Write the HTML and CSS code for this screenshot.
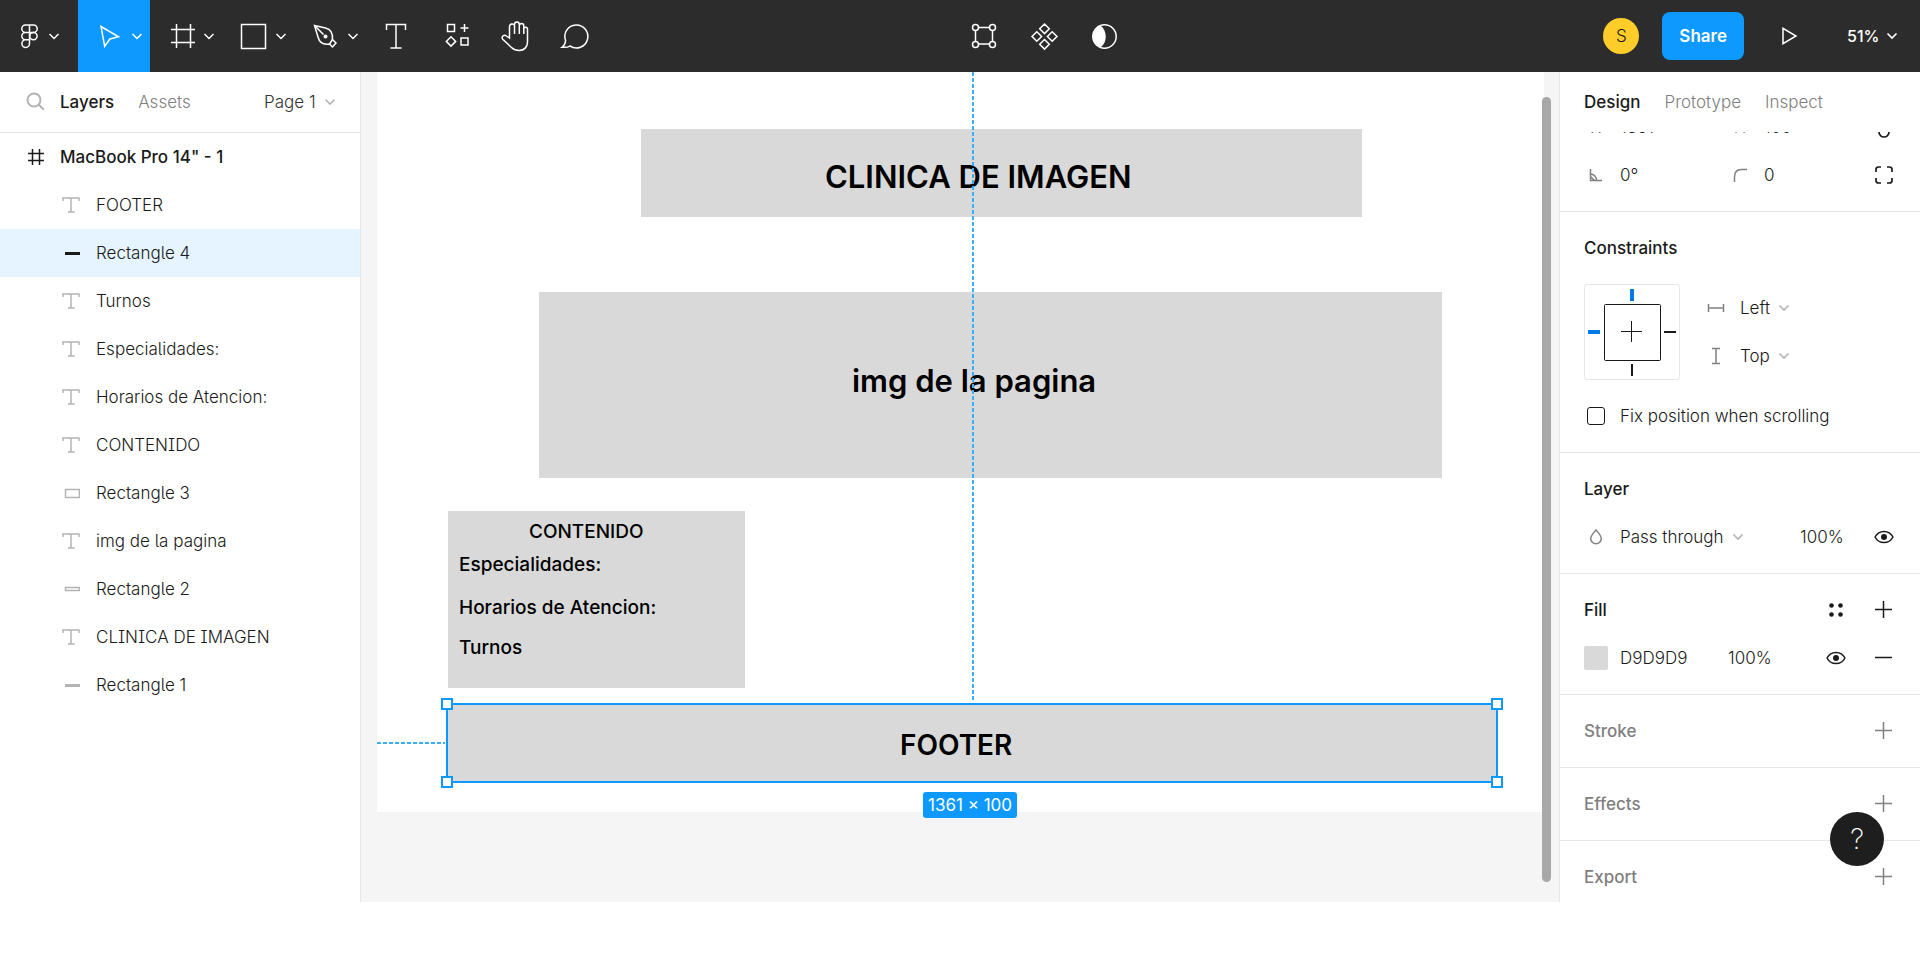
FILE: index.html
```html
<!DOCTYPE html>
<html lang="en">
<head>
<meta charset="utf-8">
<title>Design editor</title>
<link rel="stylesheet" href="styles.css">
</head>
<body>
<svg class="defs" aria-hidden="true">
  <symbol id="chev" viewBox="0 0 12 8"><path d="M1.500 1.500 6 6l4.500-4.500"/></symbol>
  <symbol id="text" viewBox="0 0 18 18"><path d="M1 5V2h16v3M9 2v14M6 16h6.500"/></symbol>
  <symbol id="plus" viewBox="0 0 18 18"><path d="M8.500 0v17M0 8.500h17"/></symbol>
  <symbol id="eye" viewBox="0 0 20 14"><path d="M1 7C3 3.200 6.200 1.400 10 1.400S17 3.200 19 7c-2 3.800-5.200 5.600-9 5.600S3 10.800 1 7z"/><circle cx="10" cy="7" r="3" class="solid"/></symbol>
</svg>
<div class="app">
  <header class="toolbar">
    <nav class="tools" aria-label="Tools">
      <button class="tool tool-menu" aria-label="Main menu"><svg width="78" height="72"><path d="M29.500 25h-4a3.700 3.700 0 0 0 0 7.400h4zM29.500 25h4a3.700 3.700 0 0 1 0 7.400h-4zM29.500 32.400h-4a3.700 3.700 0 0 0 0 7.400h4zM29.500 39.800h-4a3.800 3.800 0 1 0 4 3.700z"/><circle cx="33.400" cy="36.100" r="3.700"/><path d="m49.500 34 4.500 4.500 4.500-4.500"/></svg></button>
      <button class="tool tool-wide active" aria-label="Move"><svg width="72" height="72"><path d="m23 26.500 17.500 10.300-8.600 2.200-5.200 7.300z"/><path d="m54.500 34 4.500 4.500 4.500-4.500"/></svg></button>
      <button class="tool tool-wide" aria-label="Frame"><svg width="72" height="72"><path d="M26.500 24v24M40.500 24v24M21 29.500h24M21 42.500h24"/><path d="m54.500 34 4.500 4.500 4.500-4.500"/></svg></button>
      <button class="tool tool-wide" aria-label="Rectangle"><svg width="72" height="72"><path d="M19.500 24.500h24v24h-24z"/><path d="m54.500 34 4.500 4.500 4.500-4.500"/></svg></button>
      <button class="tool tool-wide" aria-label="Pen"><svg width="72" height="72"><path d="m20.500 25.500 11 2.500c6 1.500 7.500 6 7 11.500l3.500 3.500-3.500 4-3-3c-6 1-10-1-11.500-7zM20.500 25.500l9 9"/><path d="m38.500 39.500-3 4.500"/><circle cx="31.500" cy="36.500" r="2" class="solid"/><path d="m54.500 34 4.500 4.500 4.500-4.500"/></svg></button>
      <button class="tool" aria-label="Text"><svg width="60" height="72"><path d="M20.500 30v-5.500h19V30M30 24.500v23M24.500 48h11"/></svg></button>
      <button class="tool" aria-label="Resources"><svg width="60" height="72"><path d="M21.500 24.500h7v7h-7zM35 38h7v7h-7zM25 36.700l4.700 4.700-4.700 4.700-4.700-4.700zM38.500 24v8M34.500 28h8"/></svg></button>
      <button class="tool" aria-label="Hand"><svg width="60" height="72"><path d="M23.500 38V27c0-4 5-4 5-.5V34v-9.500c0-3.500 4.800-3.500 4.800 0V34v-8c0-3.300 4.500-3.300 4.500 0v8-4.500c0-3 3.700-2.800 3.700 0V42c0 5-3.500 8.500-8 8.500-4 0-6-1-8-3l-8.500-8c-2.500-2.500 1-5.500 3.500-3.500z"/></svg></button>
      <button class="tool" aria-label="Comment"><svg width="60" height="72"><path d="M19.600 40.500A11.500 11.500 0 1 1 24 46c-2 1.500-5 1.500-8 1.300 2-1.300 3.300-3.300 3.600-6.800z"/></svg></button>
    </nav>
    <div class="tools tools-mid">
      <button class="tool" aria-label="Edit object"><svg width="60" height="72"><path d="M24.500 27.500h11M24.500 44h11M21.500 30.500v10.500M38.500 30.500v10.500"/><circle cx="21.500" cy="27.500" r="3"/><circle cx="38.500" cy="27.500" r="3"/><circle cx="21.500" cy="44.500" r="3"/><circle cx="38.500" cy="44.500" r="3"/></svg></button>
      <button class="tool" aria-label="Create component"><svg width="60" height="72"><path d="m30.500 24 4.800 4.800-4.800 4.800-4.800-4.800zM30.500 39.500l4.800 4.800-4.800 4.800-4.800-4.800zM22.800 31.700l4.800 4.800-4.800 4.800-4.800-4.800zM38.200 31.700l4.800 4.800-4.800 4.800-4.800-4.800z"/></svg></button>
      <button class="tool" aria-label="Use as mask"><svg width="60" height="72"><circle cx="30.500" cy="36.500" r="11.700"/><path class="solid" d="M26.500 25.500c7 5.500 7 17 0 22-10-3.500-10-18.500 0-22z"/></svg></button>
    </div>
    <div class="account">
      <span class="avatar">S</span>
      <button class="share">Share</button>
      <button class="play" aria-label="Present"><svg width="18" height="20"><path d="M2 2.300v15.400L15 10z"/></svg></button>
      <label class="pick zoom"><select aria-label="Zoom"><option>51%</option></select><svg class="chev"><use href="#chev"/></svg></label>
    </div>
  </header>
  <main class="work">
    <aside class="layers">
      <div class="tabs">
        <svg class="search" width="20" height="20"><circle cx="8" cy="8" r="6.500"/><path d="m12.800 12.800 5 5"/></svg>
        <button class="tab on">Layers</button>
        <button class="tab">Assets</button>
        <label class="pick page"><select aria-label="Page"><option>Page 1</option></select><svg class="chev"><use href="#chev"/></svg></label>
      </div>
      <ul class="tree">
        <li class="row root"><svg width="18" height="18"><path d="M5.500 1v16M12.500 1v16M1 5.500h16M1 12.500h16"/></svg>MacBook Pro 14" - 1</li>
        <li class="row"><svg width="18" height="18"><use href="#text"/></svg>FOOTER</li>
        <li class="row picked"><svg width="18" height="18"><path class="thick" d="M3 9.500h15"/></svg>Rectangle 4</li>
        <li class="row"><svg width="18" height="18"><use href="#text"/></svg>Turnos</li>
        <li class="row"><svg width="18" height="18"><use href="#text"/></svg>Especialidades:</li>
        <li class="row"><svg width="18" height="18"><use href="#text"/></svg>Horarios de Atencion:</li>
        <li class="row"><svg width="18" height="18"><use href="#text"/></svg>CONTENIDO</li>
        <li class="row"><svg width="18" height="18"><path d="M3.500 5.500h14v8h-14z"/></svg>Rectangle 3</li>
        <li class="row"><svg width="18" height="18"><use href="#text"/></svg>img de la pagina</li>
        <li class="row"><svg width="18" height="18"><path d="M3.500 7.500h14v3h-14z"/></svg>Rectangle 2</li>
        <li class="row"><svg width="18" height="18"><use href="#text"/></svg>CLINICA DE IMAGEN</li>
        <li class="row"><svg width="18" height="18"><path class="thick" d="M3 9.500h15"/></svg>Rectangle 1</li>
      </ul>
    </aside>
    <section class="canvas" aria-label="Canvas">
      <div class="artboard">
        <div class="shape shape-1"></div>
        <div class="shape shape-2"></div>
        <div class="shape shape-3"></div>
        <div class="label label-xl at-title">CLINICA DE IMAGEN</div>
        <div class="label label-xl at-image">img de la pagina</div>
        <div class="label label-md at-content">CONTENIDO</div>
        <div class="label label-md at-spec">Especialidades:</div>
        <div class="label label-md at-hours">Horarios de Atencion:</div>
        <div class="label label-md at-turns">Turnos</div>
        <div class="shape shape-4"><i class="grip nw"></i><i class="grip ne"></i><i class="grip sw"></i><i class="grip se"></i></div>
        <div class="label label-lg at-footer">FOOTER</div>
        <div class="guide-v"></div>
        <div class="guide-h"></div>
        <div class="size">1361 × 100</div>
      </div>
      <div class="scroll"></div>
    </section>
    <aside class="props">
      <div class="tabs">
        <button class="tab on">Design</button>
        <button class="tab">Prototype</button>
        <button class="tab">Inspect</button>
      </div>
      <div class="panel">
        <section class="group group-size">
          <div class="line">
            <label class="field"><span class="mark">W</span><input value="1361" aria-label="Width"></label>
            <label class="field"><span class="mark">H</span><input value="100" aria-label="Height"></label>
            <button class="act" aria-label="Constrain proportions"><svg width="20" height="24"><path class="ink2" d="M5 10V6a5 5 0 0 1 10 0v4M5 15v2a5 5 0 0 0 10 0v-2"/></svg></button>
          </div>
          <div class="line">
            <label class="field"><span class="mark"><svg width="14" height="14"><path d="M1.500 1v11.500H13M1.500 6c3.500 0 6 3 6 6.500M1.500 8.500l4 4"/></svg></span><input value="0°" aria-label="Rotation"></label>
            <label class="field"><span class="mark"><svg width="14" height="14"><path d="M1.500 14V9c0-5 3-7.500 7-7.500h5.500"/></svg></span><input value="0" aria-label="Corner radius"></label>
            <button class="act" aria-label="Independent corners"><svg width="20" height="20"><path class="ink2" d="M2 7V4.500Q2 2 4.500 2H7M13 2h2.500Q18 2 18 4.500V7M18 13v2.500q0 2.500-2.500 2.500H13M7 18H4.500Q2 18 2 15.500V13"/></svg></button>
          </div>
        </section>
        <section class="group">
          <h2 class="line">Constraints</h2>
          <div class="pins">
            <svg class="pinbox" width="96" height="96"><rect x=".5" y=".5" width="95" height="95" rx="3" class="edge"/><rect x="20.500" y="20.500" width="56" height="56" rx="1" class="ink"/><path class="ink" d="M47.500 37v21M37 47.500h21"/><path class="blue" d="M48 5v12M4 48h12"/><path class="ink2" d="M80 48h12M48 80v12"/></svg>
            <div class="pinlist">
              <label class="pick"><svg width="24" height="24" class="glyph"><path d="M4.500 8v8M19.500 8v8M4.500 12h15"/></svg><select aria-label="Horizontal constraint"><option>Left</option></select><svg class="chev"><use href="#chev"/></svg></label>
              <label class="pick"><svg width="24" height="24" class="glyph"><path d="M8 4.500h8M8 19.500h8M12 4.500v15"/></svg><select aria-label="Vertical constraint"><option>Top</option></select><svg class="chev"><use href="#chev"/></svg></label>
            </div>
          </div>
          <label class="line check"><input type="checkbox">Fix position when scrolling</label>
        </section>
        <section class="group">
          <h2 class="line">Layer</h2>
          <div class="line">
            <label class="pick blend"><span class="mark"><svg width="14" height="18"><path d="M7 2C4.500 5 1.700 7.500 1.700 10.500a5.300 5.300 0 0 0 10.600 0C12.300 7.500 9.500 5 7 2z"/></svg></span><select aria-label="Blend mode"><option>Pass through</option></select><svg class="chev"><use href="#chev"/></svg></label>
            <input class="pct" value="100%" aria-label="Layer opacity">
            <button class="act" aria-label="Toggle layer"><svg width="20" height="14"><use href="#eye"/></svg></button>
          </div>
        </section>
        <section class="group">
          <h2 class="line">Fill
            <span class="acts"><button class="act" aria-label="Styles"><svg width="18" height="18"><g class="solid"><circle cx="4.500" cy="4.500" r="2.300"/><circle cx="13.500" cy="4.500" r="2.300"/><circle cx="4.500" cy="13.500" r="2.300"/><circle cx="13.500" cy="13.500" r="2.300"/></g></svg></button><button class="act" aria-label="Add fill"><svg width="18" height="18"><use href="#plus"/></svg></button></span>
          </h2>
          <div class="line">
            <label class="field"><span class="swatch"></span><input value="D9D9D9" aria-label="Fill colour"></label>
            <input class="pct" value="100%" aria-label="Fill opacity">
            <span class="acts"><button class="act" aria-label="Toggle fill"><svg width="20" height="14"><use href="#eye"/></svg></button><button class="act" aria-label="Remove fill"><svg width="18" height="18"><path d="M0 8.500h17"/></svg></button></span>
          </div>
        </section>
        <section class="group empty"><h2 class="line">Stroke<span class="acts"><button class="act" aria-label="Add stroke"><svg width="18" height="18"><use href="#plus"/></svg></button></span></h2></section>
        <section class="group empty"><h2 class="line">Effects<span class="acts"><button class="act" aria-label="Add effect"><svg width="18" height="18"><use href="#plus"/></svg></button></span></h2></section>
        <section class="group empty"><h2 class="line">Export<span class="acts"><button class="act" aria-label="Add export"><svg width="18" height="18"><use href="#plus"/></svg></button></span></h2></section>
      </div>
      <button class="help" aria-label="Help">?</button>
    </aside>
  </main>
</div>
</body>
</html>
```
FILE: styles.css
```css
* { box-sizing: border-box; }
body { margin: 0; background: #fff; color: #1a1a1a; font: 300 17px/24px Inter, "Liberation Sans", sans-serif; }
button, input, select { font: inherit; color: inherit; background: none; border: 0; padding: 0; margin: 0; border-radius: 0; }
select { appearance: none; }
input { min-width: 0; }
svg { display: block; flex: none; fill: none; stroke: currentColor; }
.defs { position: absolute; width: 0; height: 0; }
.solid { fill: currentColor; stroke: none; }
.chev { width: 12px; height: 8px; stroke-width: 1.600px; }

.app { display: flex; flex-direction: column; height: 100vh; padding-bottom: 62px; }

/* toolbar */
.toolbar { display: flex; flex: none; height: 72px; background: #2c2c2c; color: #fff; }
.tools { display: flex; }
.tools-mid { flex: 1; justify-content: center; }
.tool { width: 60px; height: 72px; }
.tool svg { stroke-width: 1.500px; }
.tool-menu { width: 78px; }
.tool-wide { width: 72px; }
.active { background: #0d99ff; }
.account { display: flex; align-items: center; justify-content: flex-end; min-width: 438px; padding-right: 22px; }
.avatar { width: 36px; height: 36px; border-radius: 50%; background: #ffcd29; color: #1a1a1a; text-align: center; line-height: 36px; }
.share { height: 48px; margin-left: 23px; padding: 0 17px; border-radius: 8px; background: #0d99ff; font-weight: 600; }
.play { margin: 0 48px 0 37px; }
.play svg { stroke-width: 1.500px; }
.pick { display: flex; align-items: center; gap: 8px; }
.pick .chev { color: #b3b3b3; }
.zoom { gap: 6px; font-size: 16px; font-weight: 500; }
.zoom .chev { color: #fff; }

/* side panels */
.work { display: flex; flex: 1; min-height: 0; }
.layers { flex: none; width: 361px; border-right: 1px solid #e6e6e6; }
.tabs { display: flex; align-items: center; height: 61px; color: #808080; }
.layers .tabs { border-bottom: 1px solid #e6e6e6; padding: 0 24px 0 26px; }
.tab.on { color: #1a1a1a; font-weight: 500; }
.search { color: #b3b3b3; stroke-width: 2px; margin-right: 14px; }
.layers .tab { margin-right: 24px; }
.page { margin-left: auto; color: #333; }
.tree { list-style: none; margin: 0; padding: 0; font-feature-settings: "cv05", "cv08"; }
.row { display: flex; align-items: center; gap: 16px; height: 48px; padding-left: 62px; }
.row svg { color: #b3b3b3; stroke-width: 1.500px; }
.row .thick { stroke-width: 3px; }
.root { padding-left: 27px; gap: 15px; font-weight: 500; }
.root svg, .picked svg { color: #1a1a1a; }
.picked { background: #e5f4ff; }

/* canvas */
.canvas { position: relative; flex: 1; min-width: 0; background: #f5f5f5; overflow: hidden; }
.artboard { position: relative; height: 740px; margin: 0 15px 0 16px; background: #fff; }
.shape, .label, .guide-v, .guide-h, .size, .grip { position: absolute; }
.shape { background: #d9d9d9; }
.shape-1 { left: 264px; top: 57px; width: 721px; height: 88px; }
.shape-2 { left: 162px; top: 220px; width: 903px; height: 186px; }
.shape-3 { left: 71px; top: 439px; width: 297px; height: 177px; }
.shape-4 { left: 69px; top: 631px; width: 1052px; height: 80px; border: 2px solid #0d99ff; }
.grip { width: 12px; height: 12px; background: #fff; border: 2px solid #0d99ff; }
.nw { left: -7px; top: -7px; }
.ne { right: -7px; top: -7px; }
.sw { left: -7px; bottom: -7px; }
.se { right: -7px; bottom: -7px; }
.label { color: #000; font-weight: 600; white-space: nowrap; }
.label-xl { font-size: 31px; line-height: 40px; }
.label-lg { font-size: 28px; line-height: 40px; }
.label-md { font-size: 19px; line-height: 24px; font-weight: 500; }
.at-title { left: 448px; top: 85px; }
.at-image { left: 475px; top: 289px; }
.at-content { left: 152px; top: 448px; }
.at-spec { left: 82px; top: 481px; }
.at-hours { left: 82px; top: 524px; }
.at-turns { left: 82px; top: 564px; }
.at-footer { left: 523px; top: 653px; }
.guide-v { left: 595px; top: 0; width: 2px; height: 628px; background: repeating-linear-gradient(#3daeff 0 4px, transparent 4px 6px); }
.guide-h { left: 0; top: 670px; width: 68px; height: 2px; background: repeating-linear-gradient(90deg, #3daeff 0 4px, transparent 4px 6px); }
.size { left: 546px; top: 720px; padding: 0 5px; border-radius: 3px; background: #0d99ff; color: #fff; font-weight: 400; line-height: 26px; white-space: nowrap; }
.scroll { position: absolute; right: 8px; top: 25px; bottom: 20px; width: 9px; border-radius: 5px; background: #a8a8a8; }

/* properties */
.props { position: relative; display: flex; flex-direction: column; flex: none; width: 361px; border-left: 1px solid #e6e6e6; background: #fff; }
.props .tabs { flex: none; gap: 24px; padding-left: 24px; height: 60px; }
.panel { flex: 1; min-height: 0; overflow: hidden; }
.group { padding: 12px 12px 12px 24px; border-bottom: 1px solid #e6e6e6; }
.group-size { margin-top: -41px; }
.line { display: flex; align-items: center; height: 48px; margin: 0; font-size: 17px; }
h2.line { font-weight: 500; }
.empty, .empty .act { color: #808080; }
.field { display: flex; align-items: center; flex: none; width: 144px; }
.field + .field { width: 120px; }
.field input { flex: 1; }
.mark { display: flex; justify-content: center; flex: none; width: 24px; margin-right: 12px; color: #808080; }
.mark svg { stroke-width: 1.500px; }
.act { display: flex; align-items: center; justify-content: center; flex: none; width: 48px; height: 48px; margin-left: auto; }
.act svg { stroke-width: 1.500px; }
.acts { display: flex; margin-left: auto; }
.ink { stroke: #1a1a1a; }
.ink2 { stroke: #1a1a1a; stroke-width: 2px; }
.act .ink2 { stroke-width: 1.700px; }
.blue { stroke: #007be5; stroke-width: 4px; }
.edge { stroke: #e6e6e6; }
.pins { display: flex; align-items: center; height: 120px; gap: 24px; }
.pinlist .pick { height: 48px; }
.glyph { color: #808080; stroke-width: 1.500px; margin-right: 4px; }
.check input { appearance: none; width: 18px; height: 18px; margin: 0 15px 0 3px; border: 1px solid #1a1a1a; border-radius: 3px; }
.blend { gap: 0; }
.blend .chev { margin-left: 8px; }
.blend + .pct { margin-left: auto; }
.pct { width: 48px; }
.blend + .pct + .act { margin-left: 12px; }
.swatch { width: 24px; height: 24px; margin-right: 12px; border-radius: 2px; background: #d9d9d9; }
.help { position: absolute; right: 36px; bottom: 36px; width: 54px; height: 54px; border-radius: 50%; background: #1e1e1e; color: #fff; font-size: 28px; font-weight: 200; }
```
